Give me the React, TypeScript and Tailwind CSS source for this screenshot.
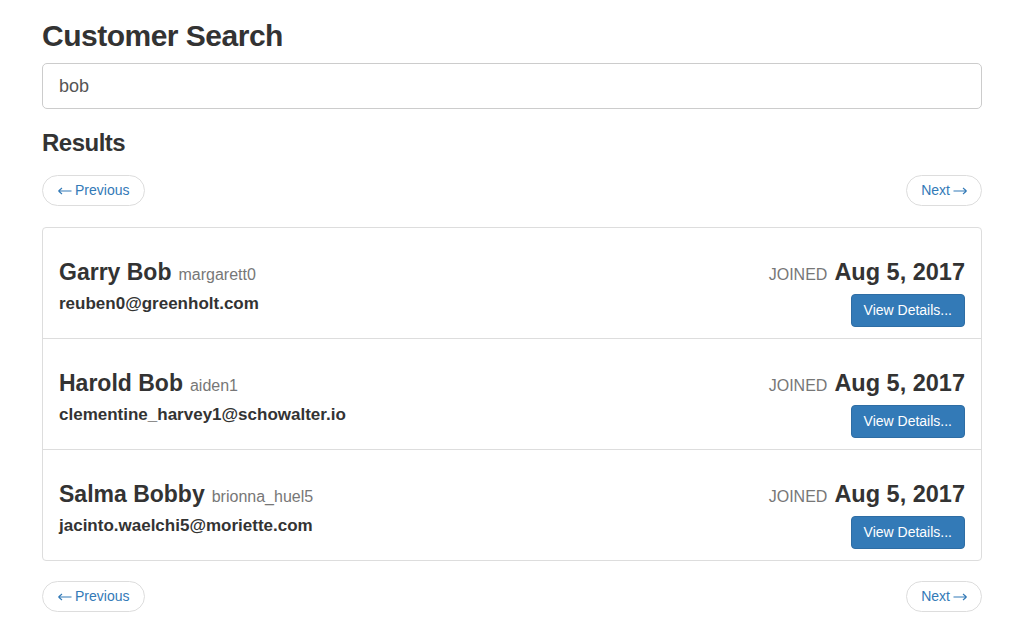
const customers = [
  { name: "Garry Bob", username: "margarett0", email: "reuben0@greenholt.com", joined: "Aug 5, 2017" },
  { name: "Harold Bob", username: "aiden1", email: "clementine_harvey1@schowalter.io", joined: "Aug 5, 2017" },
  { name: "Salma Bobby", username: "brionna_huel5", email: "jacinto.waelchi5@moriette.com", joined: "Aug 5, 2017" },
];

function Arrow({ dir }: { dir: "left" | "right" }) {
  return (
    <svg width="14" height="8" viewBox="0 0 14 8" className={dir === "right" ? "rotate-180" : ""}>
      <path d="M0.5 4H13.5M0.5 4L4 1M0.5 4L4 7" stroke="currentColor" strokeWidth="1.1" fill="none" />
    </svg>
  );
}

function Pager() {
  return (
    <div className="flex items-center justify-between">
      <a
        href="#"
        className="inline-flex h-[31px] items-center gap-[3px] rounded-full border border-[#ddd] bg-white px-[15px] text-[14px] text-[#337ab7]"
      >
        <Arrow dir="left" />
        Previous
      </a>
      <a
        href="#"
        className="inline-flex h-[31px] items-center gap-[3px] rounded-full border border-[#ddd] bg-white px-[14px] text-[14px] text-[#337ab7]"
      >
        Next
        <Arrow dir="right" />
      </a>
    </div>
  );
}

export default function App() {
  return (
    <div
      className="min-h-screen bg-white text-[#333]"
      style={{ fontFamily: '"Liberation Sans", Arial, sans-serif' }}
    >
      <div className="mx-auto w-[940px] pt-[19px]">
        <h1 className="text-[30px] font-bold leading-[34px] tracking-[-0.5px]">Customer Search</h1>
        <input
          defaultValue="bob"
          className="mt-[10px] block h-[46px] w-full rounded-[5px] border border-[#ccc] px-[16px] text-[18px] text-[#555] outline-none"
        />
        <h3 className="mt-[21px] text-[24px] font-bold leading-[26px] tracking-[-0.5px]">Results</h3>
        <div className="mt-[19px]">
          <Pager />
        </div>

        <div className="mt-[21px] rounded-[4px] border border-[#ddd]">
          {customers.map((c, i) => (
            <div
              key={c.username}
              className={`flex items-start justify-between px-[16px] pt-[31px] ${i > 0 ? "h-[111px] border-t border-[#ddd]" : "h-[110px]"}`}
            >
              <div>
                <div className="flex items-baseline gap-[7px] leading-[26px]">
                  <span className="text-[23px] font-bold">{c.name}</span>
                  <span className="text-[16px] text-[#777]">{c.username}</span>
                </div>
                <div className="mt-[5px] text-[17px] font-bold leading-[22px]">{c.email}</div>
              </div>
              <div className="flex flex-col items-end">
                <div className="flex items-baseline gap-[7px] leading-[26px]">
                  <span className="text-[16px] uppercase text-[#777]">Joined</span>
                  <span className="text-[23.5px] font-bold">{c.joined}</span>
                </div>
                <button className="mt-[6px] h-[33px] rounded-[4px] border border-[#2e6da4] bg-[#337ab7] px-[12px] text-[14px] text-white">
                  View Details...
                </button>
              </div>
            </div>
          ))}
        </div>

        <div className="mt-[20px]">
          <Pager />
        </div>
      </div>
    </div>
  );
}
